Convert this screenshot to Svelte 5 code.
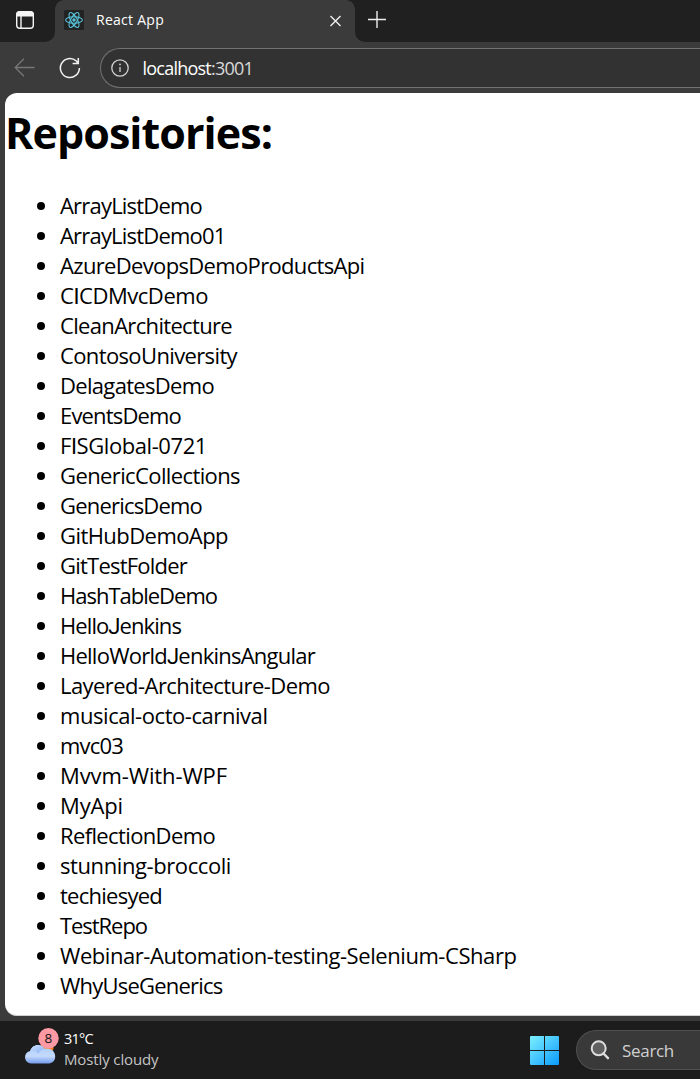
<script>
  const repositories = [
    ['ArrayListDemo', 142], ['ArrayListDemo01', 165.5], ['AzureDevopsDemoProductsApi', 304.5],
    ['CICDMvcDemo', 148], ['CleanArchitecture', 172], ['ContosoUniversity', 177],
    ['DelagatesDemo', 154], ['EventsDemo', 121], ['FISGlobal-0721', 147],
    ['GenericCollections', 180], ['GenericsDemo', 142], ['GitHubDemoApp', 168],
    ['GitTestFolder', 127], ['HashTableDemo', 157], ['HelloJenkins', 121],
    ['HelloWorldJenkinsAngular', 255], ['Layered-Architecture-Demo', 270],
    ['musical-octo-carnival', 207.5], ['mvc03', 63], ['Mvvm-With-WPF', 167], ['MyApi', 63],
    ['ReflectionDemo', 155], ['stunning-broccoli', 171], ['techiesyed', 102],
    ['TestRepo', 87], ['Webinar-Automation-testing-Selenium-CSharp', 456.5], ['WhyUseGenerics', 162.5]
  ];

  // Tracks a label so that it occupies the given width.
  function fit(node, width) {
    const natural = node.getBoundingClientRect().width;
    node.style.letterSpacing = `${(width - natural) / node.textContent.length}px`;
  }

  // Splits out the capitals that are set in a plain, unserifed form.
  const parts = (name) => name.split(/([IJ])/).filter(Boolean);
</script>

<div class="window">
  <header class="tabs">
    <div class="actions">
      <svg width="20" height="20" viewBox="0 0 20 20" fill="none" stroke="#f4f4f4" stroke-width="1.4">
        <rect x="1.7" y="1.7" width="16.6" height="16.6" rx="3" />
        <path d="M2 4.5a2.5 2.5 0 0 1 2.5-2.5h11A2.5 2.5 0 0 1 18 4.5v1.2H2z" fill="#f4f4f4" />
        <path d="M6 6v12" />
      </svg>
    </div>
    <div class="tab">
      <svg class="favicon" width="20" height="20" viewBox="0 0 20 20" fill="none" stroke="#58c4dc" stroke-width="1.1">
        <rect width="20" height="20" rx="1.5" fill="#222" stroke="none" />
        <ellipse cx="10" cy="10" rx="8.4" ry="3.2" />
        <ellipse cx="10" cy="10" rx="8.4" ry="3.2" transform="rotate(60 10 10)" />
        <ellipse cx="10" cy="10" rx="8.4" ry="3.2" transform="rotate(120 10 10)" />
        <circle cx="10" cy="10" r="1.7" fill="#58c4dc" stroke="none" />
      </svg>
      <span class="title"><span class="label" use:fit={68}>React App</span></span>
      <svg class="close" width="12" height="12" viewBox="0 0 12 12" stroke="#f0f0f0" stroke-width="1.4">
        <path d="M.5 1l10 10M10.500 1L.5 11" />
      </svg>
    </div>
    <svg class="plus" width="18" height="18" viewBox="0 0 18 18" stroke="#eee" stroke-width="1.4">
      <path d="M0 8.500h18M9 0v17" />
    </svg>
  </header>

  <nav class="toolbar">
    <svg class="back" width="21" height="20" viewBox="0 0 21 20" fill="none" stroke="#777" stroke-width="1.3">
      <path d="M20.5 9.5H1M10 .7L1.2 9.5l8.8 8.8" />
    </svg>
    <svg class="reload" width="22" height="22" viewBox="0 0 22 22" fill="none" stroke="#f1f1f1" stroke-width="1.5">
      <path d="M20.4 11a9.5 9.5 0 1 1-3.3-7.2L19 6M19.3 1v5.5h-5.7" />
    </svg>
    <div class="address">
      <svg width="18" height="18" viewBox="0 0 18 18" fill="none" stroke="#d2d2d2" stroke-width="1.3">
        <circle cx="9" cy="9" r="8.2" />
        <path d="M9 8v5" />
        <circle cx="9" cy="5.4" r=".9" fill="#d2d2d2" stroke="none" />
      </svg>
      <span class="url"><span class="label" use:fit={110.5}>localhost<span class="port">:3001</span></span></span>
    </div>
  </nav>

  <main>
    <h1><span class="label" use:fit={267}>Repositories:</span></h1>
    <ul>
      {#each repositories as [name, width]}
        <li><span class="label" use:fit={width}>{#each parts(name) as part}<span class:plain={part === 'I' || part === 'J'}>{part}</span>{/each}</span></li>
      {/each}
    </ul>
  </main>

  <footer>
    <div class="weather">
      <svg width="36" height="38" viewBox="0 0 36 38">
        <defs>
          <linearGradient id="cloud" x1="0" y1="0" x2="0" y2="1">
            <stop offset="0" stop-color="#a9cbfd" />
            <stop offset=".6" stop-color="#c5dafb" />
            <stop offset="1" stop-color="#739cec" />
          </linearGradient>
          <linearGradient id="puff" x1="0" y1="0" x2="1" y2="1">
            <stop offset="0" stop-color="#d3e4ff" />
            <stop offset="1" stop-color="#83aef2" />
          </linearGradient>
        </defs>
        <circle cx="23" cy="20" r="6.5" fill="#f58220" />
        <path d="M7 35.500a6.300 6.300 0 0 1-.8-12.500C8 16.500 17 14.500 20.500 20.800C26 19.500 31.200 23 31.200 28.500C31.200 33 28 35.500 24 35.500z" fill="url(#cloud)" />
        <path d="M6.200 23C8 16.500 17 14.500 20.500 20.800c-3.200.7-5 2.400-6 4.800-2-2.400-4.600-3.400-8.300-2.600z" fill="url(#puff)" />
        <circle cx="24.500" cy="10.300" r="10.200" fill="#ff99a4" />
        <text x="24.300" y="15" text-anchor="middle" font-size="13.500" fill="#111">8</text>
      </svg>
      <div class="forecast">
        <div class="degrees"><span class="label" use:fit={29}>31°C</span></div>
        <div class="sky"><span class="label" use:fit={94.5}>Mostly cloudy</span></div>
      </div>
    </div>
    <svg class="start" width="30" height="30" viewBox="0 0 30 30">
      <defs>
        <linearGradient id="glass" gradientUnits="userSpaceOnUse" x1="0" y1="0" x2="30" y2="30">
          <stop offset="0" stop-color="#7cf0ff" />
          <stop offset=".5" stop-color="#43c4ff" />
          <stop offset="1" stop-color="#0596fb" />
        </linearGradient>
      </defs>
      <path d="M1 0h13v14H0V1a1 1 0 0 1 1-1zM15 0h13a1 1 0 0 1 1 1v13H15zM0 15h14v14H1a1 1 0 0 1-1-1zM15 15h14v13a1 1 0 0 1-1 1H15z" fill="url(#glass)" />
    </svg>
    <div class="search">
      <svg width="20" height="20" viewBox="0 0 20 20" fill="#606060" stroke="#dedede" stroke-width="2">
        <circle cx="8.7" cy="8.3" r="7" />
        <path d="M13.5 13.5l4.5 4.7" stroke-width="2.4" stroke-linecap="round" />
      </svg>
      <span class="label" use:fit={52}>Search</span>
    </div>
  </footer>
</div>

<style>
  :global(body) { margin: 0; background: #3b3b3b; }
  .window {
    width: 700px; height: 1079px; overflow: hidden;
    display: flex; flex-direction: column;
    background: #3b3b3b;
    font-family: "Open Sans", "Noto Sans", sans-serif;
    font-variant-ligatures: none;
  }
  svg { display: block; flex: none; }
  .label { display: inline-block; white-space: nowrap; }
  .plain { font-family: Roboto, sans-serif; font-weight: 400; line-height: 1; }

  .tabs { height: 42px; display: flex; flex: none; background: #3b3b3b; }
  .actions {
    width: 55px; height: 42px; box-sizing: border-box; padding: 10px 0 0 15px;
    background: #202020; border-bottom-right-radius: 10px;
  }
  .tab {
    width: 300px; height: 42px; box-sizing: border-box; display: flex; align-items: center;
    padding: 0 13px 2px 9px; background: #3b3b3b;
    position: relative;
  }
  .tab::before, .tab::after {
    content: ""; position: absolute; top: 0; width: 9px; height: 9px;
  }
  .tab::before { left: 0; background: radial-gradient(circle at 100% 100%, transparent 8.5px, #202020 9px); }
  .tab::after { right: 0; background: radial-gradient(circle at 0 100%, transparent 8.5px, #202020 9px); }
  .title { flex: 1; padding-left: 12px; font-size: 14px; line-height: 20px; color: #fff; }
  .close { margin-top: 1px; }
  .plus {
    box-sizing: border-box; flex: 1; width: 0; height: 42px; padding: 11px 314px 13px 13px;
    background: #202020; border-bottom-left-radius: 10px;
  }

  .toolbar { height: 51px; display: flex; flex: none; align-items: center; padding-left: 14px; }
  .reload { margin-left: 24px; }
  .address {
    flex: 1; height: 40px; box-sizing: border-box; margin-left: 19px; padding-left: 10px;
    display: flex; align-items: center; gap: 13.5px; margin-top: 1px;
    border: 1px solid #727272; border-right: 0; border-radius: 20px 0 0 20px; background: #323232;
  }
  .url { font-size: 18px; line-height: 26px; color: #fff; margin-top: -1px; }
  .port { color: #d9d9d9; }

  main {
    height: 923px; flex: none; box-sizing: border-box; margin: 0 0 5px 5px;
    border-bottom: 1px solid #cfcfcf; border-radius: 12px 0 0 12px; background: #fff; color: #000;
  }
  h1 { margin: 0; padding: 10px 0 0; height: 88px; font-size: 43px; line-height: 60px; font-weight: 700; }
  ul { margin: 0; padding: 0; list-style: none; }
  li { display: flex; align-items: center; height: 30px; padding-left: 32px; font-size: 22px; line-height: 30px; }
  li .label { height: 30px; margin-top: -2px; }
  li::before { content: ""; width: 8px; height: 8px; margin-right: 15px; border-radius: 50%; background: #000; }

  footer { height: 58px; flex: none; display: flex; align-items: center; background: #1c1c1c; }
  .weather { width: 530px; display: flex; align-items: center; padding-left: 24px; box-sizing: border-box; }
  .weather > svg { margin-top: -7px; }
  .forecast { padding-left: 4px; margin-top: -3px; font-size: 15px; line-height: 20px; }
  .degrees { color: #fff; font-size: 14.5px; }
  .sky { color: #c4c4c4; }
  .start { margin-top: 2px; }
  .search {
    width: 124px; height: 40px; box-sizing: border-box; margin-left: 16px; padding-left: 13px;
    display: flex; align-items: center; gap: 12px; border: 1px solid #505050; border-right: 0;
    border-radius: 20px 0 0 20px; background: #393939; color: #d0d0d0; font-size: 17px;
  }
</style>
